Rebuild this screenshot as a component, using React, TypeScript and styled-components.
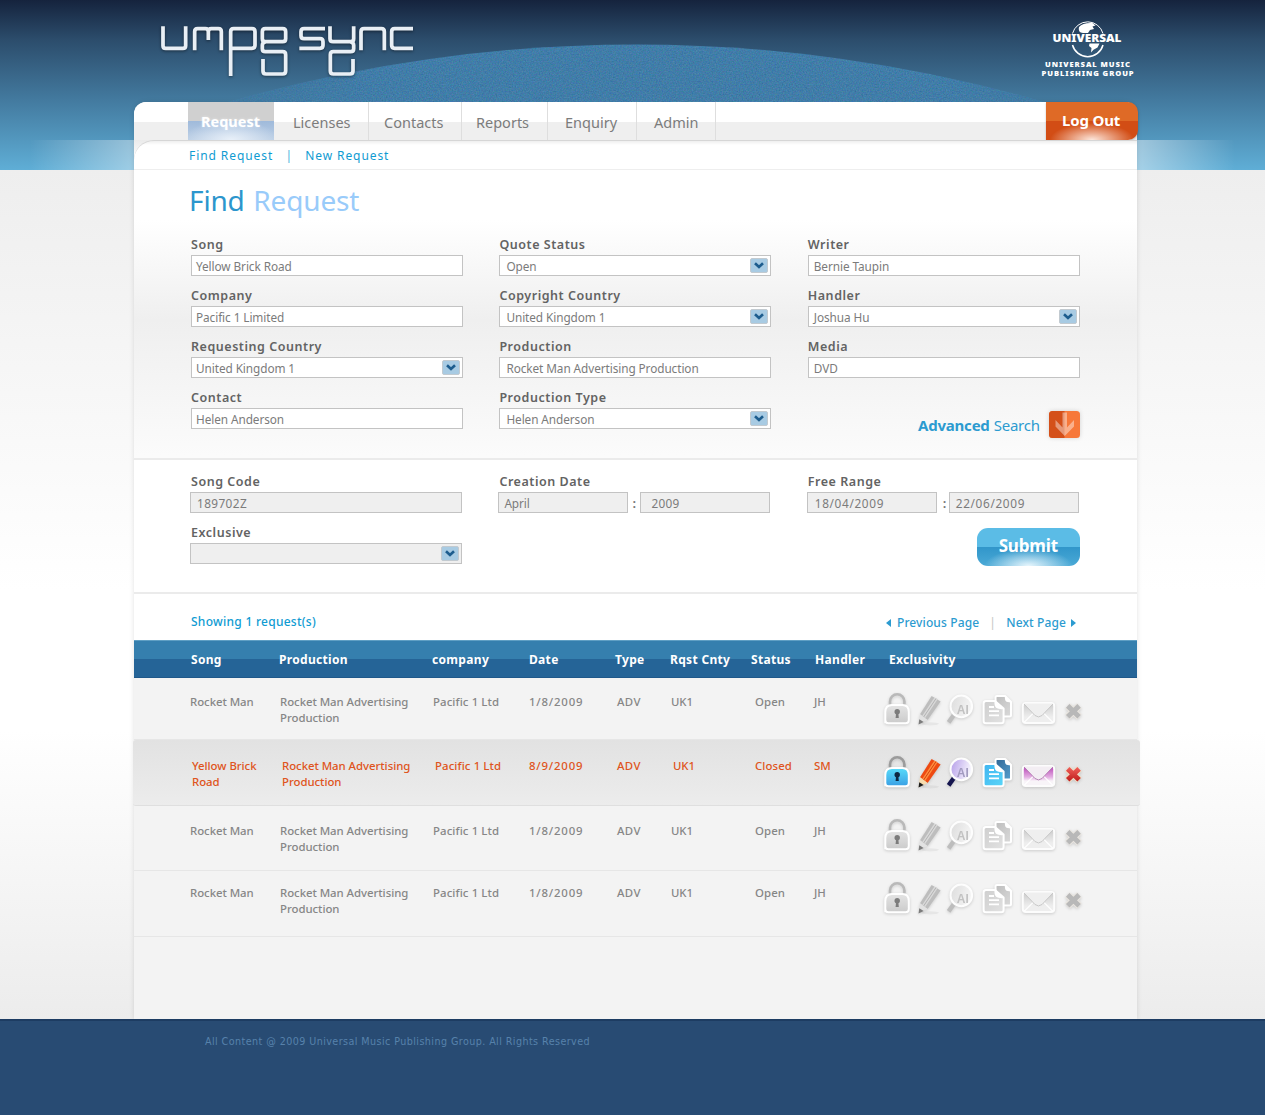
import React from "react";
import styled, { createGlobalStyle } from "styled-components";

const GlobalStyle = createGlobalStyle`
  * { box-sizing: border-box; }
  body { margin: 0; font-family: "Noto Sans", "Open Sans", sans-serif; color: #777; }
`;

const Page = styled.div`
  display: flex;
  flex-direction: column;
  height: 1115px;
  overflow: hidden;
  background:
    linear-gradient(to right, rgba(255,255,255,0) 30px, rgba(255,255,255,.4) 134px) 0 140px / 134px 30px no-repeat,
    linear-gradient(to left, rgba(255,255,255,0) 30px, rgba(255,255,255,.45) 128px) 100% 140px / 128px 30px no-repeat,
    linear-gradient(#15233d, #2c4d6c 40px, #437a9f 100px, #5faed6 170px) 0 0 / 100% 170px no-repeat,
    linear-gradient(#eeeeee, #ffffff 420px, #ffffff 560px, #ececec 849px) 0 170px / 100% 849px no-repeat;
`;

const Header = styled.header`
  height: 102px;
  flex: none;
  display: grid;
  grid-template-columns: 158px 260px 1fr 100px 128px;
  align-items: start;
  position: relative;
`;
const Arc = styled.svg`
  position: absolute;
  left: 225px;
  top: 40px;
`;
const Wordmark = styled.svg`
  grid-column: 2;
  margin-top: 24px;
  position: relative;
  filter: drop-shadow(0 1px 1.5px rgba(0,0,0,.45));
`;
const Universal = styled.svg`
  grid-column: 4;
  margin-top: 18px;
`;

const Shell = styled.main`
  width: 1003px;
  height: 917px;
  flex: none;
  margin-left: 134px;
  display: flex;
  flex-direction: column;
  background: #f3f3f3;
  border-radius: 12px 12px 0 0;
  box-shadow: 0 0 5px rgba(0,0,0,.12);
`;

const Nav = styled.nav`
  display: flex;
  flex: none;
  height: 38px;
  padding-left: 54px;
  border-radius: 12px 12px 0 0;
  background: linear-gradient(#fff 0 20px, #efefef 20px);
`;
const Tab = styled.a<{ $w: number; $pad: number }>`
  width: ${p => p.$w}px;
  padding-left: ${p => p.$pad}px;
  border-right: 1px solid #dedede;
  font-size: 14.5px;
  line-height: 41px;
  color: #7c7c7c;
`;
const ActiveTab = styled(Tab)`
  border-right: 0;
  color: #fff;
  font-weight: 700;
  line-height: 39px;
  text-shadow: 0 0 3px rgba(255,255,255,.5);
  background:
    radial-gradient(ellipse 48px 20px at 50% 100%, rgba(235,242,250,.95), rgba(235,242,250,0)) 0 19px / 100% 19px no-repeat,
    linear-gradient(#d0d0d0 0 19px, #9fbadb 19px, #bccfe5);
`;
const LogOut = styled.a`
  width: 92px;
  margin: 0 -1px 0 auto;
  padding-left: 16px;
  border-radius: 0 10px 10px 0;
  color: #fff;
  font-size: 15px;
  font-weight: 700;
  letter-spacing: -.15px;
  line-height: 37px;
  background:
    radial-gradient(ellipse 42px 17px at 50% 100%, rgba(255,240,232,.95), rgba(255,235,225,0)) 0 20px / 100% 18px no-repeat,
    linear-gradient(#df6a26 0 19px, #d24d15 19px);
  box-shadow: 0 1px 2px rgba(0,0,0,.25);
`;

const SubNavBack = styled.div`
  flex: none;
  background: linear-gradient(#ebebeb, #fff 20px);
`;
const SubNav = styled.div`
  display: flex;
  height: 30px;
  padding: 0 0 0 55px;
  border-top: 1px solid #d6d6d6;
  border-bottom: 1px solid #eee;
  border-radius: 20px 0 0 0;
  background: linear-gradient(#efefef, #fff 4px);
  color: #0f9bd2;
  font-size: 12px;
  letter-spacing: .92px;
  line-height: 30px;
`;
const Sep = styled.span`
  width: 32px;
  text-align: center;
  color: #49b3dc;
`;

const Title = styled.h1`
  flex: none;
  height: 50px;
  margin: 0;
  padding-left: 55px;
  background: #fff;
  font-size: 28px;
  font-weight: 400;
  letter-spacing: -.15px;
  word-spacing: 1.5px;
  line-height: 60px;
  color: #2c96cd;
  span { color: #99cbfa; }
`;

const Section = styled.section<{ $basic?: boolean }>`
  flex: none;
  display: grid;
  grid-template-columns: 272px 272px 272px;
  column-gap: 36.4px;
  row-gap: 10px;
  align-content: start;
  height: ${p => (p.$basic ? 240 : 134)}px;
  padding: ${p => (p.$basic ? "15px 0 0 57px" : "12px 0 0 56px")};
  border-bottom: 2px solid #ebebeb;
  background: ${p => (p.$basic ? "linear-gradient(#fff, #efefef 100px, #fbfbfb 235px)" : "#fff")};
`;
const Label = styled.div<{ $indent?: number }>`
  height: 20px;
  padding-left: ${p => p.$indent ?? 0}px;
  font-size: 12.5px;
  font-weight: 600;
  letter-spacing: .54px;
  line-height: 20px;
  color: #636363;
`;
const Box = styled.div<{ $pad?: number; $off?: boolean; $w?: number; $ls?: number }>`
  display: flex;
  justify-content: space-between;
  align-items: center;
  width: ${p => (p.$w ? p.$w + "px" : "100%")};
  height: 21px;
  padding: 0 2px 0 ${p => p.$pad ?? 4}px;
  border: 1px solid #c3c3c3;
  background: ${p => (p.$off ? "#efefef" : "#fff")};
  font-size: 11.8px;
  font-weight: 400;
  letter-spacing: ${p => p.$ls ?? -0.08}px;
  line-height: 20px;
  color: #7b7b7b;
`;
const Range = styled.div`
  display: flex;
  align-items: center;
  justify-content: space-between;
  font-size: 13px;
  font-weight: 600;
  line-height: 20px;
`;
const ActionCell = styled.div<{ $top: number; $out?: number }>`
  display: flex;
  justify-content: flex-end;
  align-items: center;
  height: 31px;
  margin: ${p => p.$top}px ${p => -(p.$out ?? 0)}px 0 0;
  font-size: 15px;
  letter-spacing: -.22px;
  color: #2c9bd0;
  b { margin-right: 4px; }
`;
const ArrowButton = styled.svg`
  margin-left: 7px;
  margin-right: -2px;
  filter: drop-shadow(0 0 2px rgba(0,0,0,.15));
`;
const Submit = styled.button`
  width: 103px;
  height: 38px;
  border: 0;
  padding: 0 0 3px;
  border-radius: 11px;
  color: #fff;
  font: 700 17px "Noto Sans", sans-serif;
  letter-spacing: -.15px;
  background:
    radial-gradient(ellipse 44px 17px at 50% 100%, rgba(240,250,255,.95), rgba(240,250,255,0)) 0 20px / 100% 18px no-repeat,
    linear-gradient(#5bbce6 0 19px, #3196ca 19px, #4aa9d6);
`;

const ResultsBar = styled.div`
  flex: none;
  display: flex;
  justify-content: space-between;
  height: 46px;
  padding: 8px 61px 0 57px;
  background: #fff;
  font-size: 12px;
  font-weight: 500;
  line-height: 40px;
  letter-spacing: .27px;
  color: #0f9bd2;
`;
const Pager = styled.div`
  display: flex;
  align-items: center;
  height: 42px;
  letter-spacing: .12px;
  line-height: 42px;
  color: #2c9bd0;
  i { font-style: normal; color: #c9c9c9; width: 27px; text-align: center; }
`;
const Tri = styled.span<{ $next?: boolean }>`
  border: 4.5px solid transparent;
  border-width: 4.5px 0;
  ${p => (p.$next ? "border-left: 5px solid #2c9bd0; margin-left: 5px;" : "border-right: 5px solid #2c9bd0; margin-right: 6px;")}
`;

const TableHead = styled.div`
  flex: none;
  display: grid;
  grid-template-columns: 88px 153px 97px 86px 55px 81px 64px 74px 1fr;
  height: 38px;
  padding-left: 57px;
  background: linear-gradient(#5f9fc4 0 1px, #357fae 1px 19px, #256497 19px 37px, #1f588a 37px);
  color: #fff;
  font-size: 12px;
  font-weight: 700;
  letter-spacing: .32px;
  line-height: 39px;
`;
const Row = styled.div<{ $h: number; $top: number; $active?: boolean }>`
  flex: none;
  display: grid;
  grid-template-columns: ${p => (p.$active ? "90px 153px 94px 88px 56px 82px 59px 68px 1fr" : "90px 153px 96px 88px 54px 84px 59px 68px 1fr")};
  height: ${p => p.$h}px;
  padding: ${p => p.$top}px 0 0 ${p => (p.$active ? 59 : 56)}px;
  margin: ${p => (p.$active ? "0 -3px 0 -1px" : 0)};
  border-bottom: 1px solid ${p => (p.$active ? "#dfdfdf" : "#e6e6e6")};
  background: ${p => (p.$active ? "linear-gradient(#e2e2e2, #ececec)" : "#f3f3f3")};
  border-radius: ${p => (p.$active ? "3px" : 0)};
  font-size: 11.4px;
  font-weight: 500;
  line-height: 16px;
  color: ${p => (p.$active ? "#df5420" : "#868686")};
`;
const Cell = styled.div<{ $ls?: number }>`
  letter-spacing: ${p => p.$ls ?? -0.04}px;
  white-space: pre-line;
`;
const Icons = styled.div<{ $lift: number }>`
  display: flex;
  height: 36px;
  margin-top: ${p => p.$lift}px;
  filter: drop-shadow(0 1px 1.5px rgba(0,0,0,.16));
`;

const Footer = styled.footer`
  flex: 1;
  padding: 13px 0 0 205px;
  border-top: 2px solid #1d3c62;
  background: #284b73;
  font: 9.6px/16px "DejaVu Sans", sans-serif;
  letter-spacing: .42px;
  color: #5782ab;
`;

const Chevron = () => (
  <svg width="18" height="15" viewBox="0 0 18 15">
    <rect x=".5" y=".5" width="17" height="14" rx="1.5" fill="#a8cbe3" stroke="#c2cad0" />
    <path d="M5 5.2 L9 9 L13 5.2" fill="none" stroke="#1d5d8e" strokeWidth="2.6" />
  </svg>
);

const LockIcon = ({ on }: { on?: boolean }) => (
  <svg width="30" height="36">
    <path d="M8 14 V9.5 a7.2 7.2 0 0 1 14.4 0 V14" fill="none" stroke={on ? "#9b9b9b" : "#b9b9b9"} strokeWidth="2.6" />
    <path d="M3.3 31.3 V20 Q3.3 13 10 13 H20.5 Q26.8 13 26.8 20 V28 Q26.8 31.3 23.5 31.3 H6.5 Q3.3 31.3 3.3 28Z" fill={on ? "url(#lockOn)" : "url(#greyFill)"} stroke="#fff" strokeWidth="2" />
    <circle cx="15.2" cy="19.8" r="2.7" fill={on ? "#0d2742" : "#7c7c7c"} />
    <path d="M14.2 20 h2 l.6 6 h-3.2z" fill={on ? "#0d2742" : "#7c7c7c"} />
  </svg>
);
const PencilIcon = ({ on }: { on?: boolean }) => (
  <svg width="32" height="36">
    <ellipse cx="18" cy="31.8" rx="9" ry="1.6" fill="#000" opacity=".05" />
    <path d="M19.6 4 L28.6 9.4 L15.6 28 L8 22.3Z" fill={on ? "#ee4a12" : "#bdbdbd"} />
    <path d="M22.4 5.6 L25.4 7.4 L13.2 26 L10.2 24Z" fill={on ? "#ff8d3c" : "#d9d9d9"} />
    <path d="M24 6.6 L11.6 25" stroke={on ? "#c92a04" : "#a8a8a8"} strokeWidth=".8" />
    <path d="M8 22.3 L15.6 28 L6.7 32Z" fill={on ? "#f7dcae" : "#e2e2e2"} />
    <path d="M7.3 27.3 L11.7 29.9 L6.5 32.4Z" fill={on ? "#1b1b1b" : "#7c7c7c"} />
  </svg>
);
const SearchIcon = ({ on }: { on?: boolean }) => (
  <svg width="36" height="36">
    <path d="M10.6 22 L4.6 30.4" stroke={on ? "#15154e" : "#bdbdbd"} strokeWidth="4.4" />
    <path d="M12 20.6 L9.6 23.6" stroke={on ? "#8f8fb0" : "#d0d0d0"} strokeWidth="3" />
    <circle cx="17.3" cy="14.4" r="10.8" fill={on ? "url(#lensOn)" : "url(#lensOff)"} stroke="#fdfdfd" strokeWidth="2" />
    <g clipPath="url(#lensClip)">
      <text x="12.8" y="21.6" fontFamily="Liberation Sans, sans-serif" fontWeight="700" fontSize="12" fill={on ? "#a29bc0" : "#c2c2c2"}>AI</text>
    </g>
  </svg>
);
const CopyIcon = ({ on }: { on?: boolean }) => (
  <svg width="38" height="36">
    <path d="M15.5 5.5 Q15.5 4 17 4 H25 L31 10 V23 Q31 24.5 29.5 24.5 H16Z" fill={on ? "url(#backOn)" : "url(#backOff)"} stroke="#fff" strokeWidth="2" strokeLinejoin="round" />
    <path d="M25 3.5 Q24.5 9 26.5 9.8 Q28.5 10.5 31.5 10Z" fill="#fff" />
    <path d="M3.6 11.5 Q3.6 9 6 9 H15 L23.6 16.5 V29 Q23.6 31.3 21.3 31.3 H6 Q3.6 31.3 3.6 29Z" fill={on ? "url(#pageOn)" : "url(#pageOff)"} stroke="#fff" strokeWidth="2" strokeLinejoin="round" />
    <path d="M14.5 8.5 Q14 14.5 16.5 16 Q19 17.5 24 17Z" fill="#fff" />
    <path d="M9 15 H14 M9 19.2 H19 M9 23.3 H19" stroke="#fff" strokeWidth="1.8" />
  </svg>
);
const MailIcon = ({ on }: { on?: boolean }) => (
  <svg width="42" height="36">
    <rect x="4.8" y="11" width="31.4" height="20" rx="3" fill={on ? "url(#mailOn)" : "url(#mailOff)"} stroke="#fcfcfc" strokeWidth="2" />
    <path d="M6 30.5 L15 21.5 M35 30.5 L26 21.5" stroke="#fff" strokeWidth="1.2" opacity=".9" />
    <path d="M6 11.4 H35 L24 23.5 Q20.5 26.4 17 23.5Z" fill={on ? "#f3eef3" : "#efefef"} />
    <path d="M6 12 L17 23.5 Q20.5 26.4 24 23.5 L35 12" fill="none" stroke={on ? "#b07db0" : "#c4c4c4"} strokeWidth=".9" />
  </svg>
);
const CrossIcon = ({ on }: { on?: boolean }) => (
  <svg width="26" height="36">
    <path d="M7.5 13.7 L19.3 24.9 M19.3 13.7 L7.5 24.9" stroke={on ? "#f0ddc4" : "#e9e5df"} strokeWidth="7" />
    <path d="M7.7 13.9 L19.1 24.7 M19.1 13.9 L7.7 24.7" stroke={on ? "url(#crossOn)" : "#b8b8b8"} strokeWidth="5" />
  </svg>
);

const DefsSvg = styled.svg`
  position: absolute;
`;
const Defs = () => (
  <DefsSvg width="0" height="0">
    <defs>
      <clipPath id="lensClip"><circle cx="17.3" cy="14.4" r="9.8" /></clipPath>
      <linearGradient id="lockOn" x2="0" y2="1"><stop stopColor="#58dcfa" /><stop offset="1" stopColor="#3a9fe4" /></linearGradient>
      <linearGradient id="greyFill" x2="0" y2="1"><stop stopColor="#e4e4e4" /><stop offset="1" stopColor="#cbcbcb" /></linearGradient>
      <linearGradient id="lensOn" x2="1" y2=".3"><stop stopColor="#b39be8" /><stop offset="1" stopColor="#f6f4fd" /></linearGradient>
      <linearGradient id="lensOff" x2="1" y2=".3"><stop stopColor="#dcdcdc" /><stop offset="1" stopColor="#f4f4f4" /></linearGradient>
      <linearGradient id="pageOn" x2="1" y2="1"><stop stopColor="#3fb4f0" /><stop offset="1" stopColor="#5ad6f8" /></linearGradient>
      <linearGradient id="pageOff" x2="1" y2="1"><stop stopColor="#cecece" /><stop offset="1" stopColor="#e2e2e2" /></linearGradient>
      <linearGradient id="backOn" x2="1" y2="1"><stop stopColor="#2f6594" /><stop offset="1" stopColor="#56a0cf" /></linearGradient>
      <linearGradient id="backOff" x2="1" y2="1"><stop stopColor="#bdbdbd" /><stop offset="1" stopColor="#dadada" /></linearGradient>
      <linearGradient id="mailOn" x2="0" y2="1"><stop stopColor="#b63fb4" /><stop offset=".55" stopColor="#e3aee2" /><stop offset=".75" stopColor="#f8f4f8" /></linearGradient>
      <linearGradient id="mailOff" x2="0" y2="1"><stop stopColor="#cacaca" /><stop offset=".7" stopColor="#eeeeee" /></linearGradient>
      <linearGradient id="crossOn" gradientUnits="userSpaceOnUse" x1="0" y1="12" x2="0" y2="28"><stop stopColor="#f0605a" /><stop offset="1" stopColor="#b91515" /></linearGradient>
    </defs>
  </DefsSvg>
);

const Logo = () => (
  <Wordmark width="260" height="56" viewBox="84 72 780 168">
    <g fill="none" stroke="#e9eff5" strokeWidth="11.2">
      <path d="M99 79 V137 Q99 145 107 145 H159 Q167 145 167 137 V79" />
      <path d="M194 151 V95 Q194 86 203 86 H226 Q235 86 235 95 V120 M235 95 Q235 86 244 86 H265 Q274 86 274 95 V151" />
      <path d="M302 228 V95 Q302 86 311 86 H366 Q375 86 375 95 V136 Q375 145 366 145 H302" />
      <path d="M406 86 H458 Q467 86 467 95 V116 Q467 125 458 125 H406 Q397 125 397 116 V95 Q397 86 406 86Z" />
      <path d="M406 125 Q397 128 397 136 V146 Q397 155 406 155 H458 Q467 155 467 164 V213 Q467 222 458 222 H408 Q399 222 399 213 V177" />
      <path d="M585 86 H522 Q513 86 513 95 V107 Q513 116 522 116 H570 Q579 116 579 125 V136 Q579 145 570 145 H508" />
      <path d="M600 79 V116 Q600 125 609 125 H662 Q671 125 671 116 V79" />
      <path d="M662 125 Q671 128 671 136 V146 Q671 155 662 155 H610 Q601 155 601 164 V213 Q601 222 610 222 H660 Q669 222 669 213 V177" />
      <path d="M693 151 V95 Q693 86 702 86 H754 Q763 86 763 95 V151" />
      <path d="M849 86 H794 Q785 86 785 95 V136 Q785 145 794 145 H849" />
    </g>
  </Wordmark>
);

const UniversalLogo = () => (
  <Universal width="100" height="62" viewBox="0 0 100 62">
    <g fill="none" stroke="#fff" strokeWidth="1">
      <path d="M35.5 15.5 A15.8 15.8 0 0 1 66 15.5" />
      <path d="M35.5 27 A15.8 15.8 0 0 0 66 27" strokeWidth="1.5" />
    </g>
    <path d="M42 9 Q46 4.4 55.5 5 L58.5 7.5 L55.5 8.5 L57 11 L53 12 L51 15 H46 Q40.5 14.5 42 9Z" fill="#fff" />
    <path d="M52.5 25.5 L62.5 25.5 L60.5 29.5 L56.5 31.8 L54 34.6 L54.5 30 L52 28Z" fill="#fff" />
    <g fill="#fff" fontFamily="Noto Sans, sans-serif" fontWeight="900">
      <text x="15.5" y="24.2" fontSize="9.6" textLength="69" lengthAdjust="spacingAndGlyphs">UNIVERSAL</text>
      <text x="8" y="49.3" fontSize="6.6" textLength="86" letterSpacing=".8" lengthAdjust="spacingAndGlyphs">UNIVERSAL MUSIC</text>
      <text x="4.6" y="57.7" fontSize="6.6" textLength="93" letterSpacing=".8" lengthAdjust="spacingAndGlyphs">PUBLISHING GROUP</text>
    </g>
  </Universal>
);

const HeaderArc = () => (
  <Arc width="830" height="62" viewBox="0 0 830 62">
    <defs>
      <linearGradient id="arcFade">
        <stop stopColor="#407ca8" stopOpacity=".4" />
        <stop offset=".18" stopColor="#407ca8" />
        <stop offset=".88" stopColor="#407ca8" />
        <stop offset="1" stopColor="#407ca8" stopOpacity=".6" />
      </linearGradient>
      <filter id="grain" x="0" y="0" width="100%" height="100%" colorInterpolationFilters="sRGB">
        <feTurbulence type="fractalNoise" baseFrequency=".7" numOctaves="2" seed="4" />
        <feColorMatrix values=".22 0 0 0 .145  0 .18 0 0 .4  0 0 .18 0 .57  0 0 0 0 1" result="n" />
        <feComposite in="n" in2="SourceGraphic" operator="in" />
      </filter>
    </defs>
    <path d="M2 62 A1482 1482 0 0 1 820 62Z" fill="url(#arcFade)" filter="url(#grain)" />
  </Arc>
);

type FieldProps = { label: string; value: string; pad?: number; select?: boolean; off?: boolean; indent?: number; ls?: number };
const Field = ({ label, value, pad, select, off, indent, ls }: FieldProps) => (
  <div>
    <Label $indent={indent}>{label}</Label>
    <Box $pad={pad} $off={off} $ls={ls}>
      <span>{value}</span>
      {select && <Chevron />}
    </Box>
  </div>
);

const tabs: [string, number, number][] = [
  ["Licenses", 95, 19],
  ["Contacts", 93, 15],
  ["Reports", 86, 14],
  ["Enquiry", 89, 17],
  ["Admin", 79, 17],
];

const rows = [
  { h: 62, top: 16, lift: -2 },
  { h: 66, top: 18, lift: -3, active: true },
  { h: 65, top: 17, lift: -5 },
  { h: 66, top: 14, lift: -4 },
];

const App = () => (
  <Page>
    <GlobalStyle />
    <Defs />
    <Header>
      <HeaderArc />
      <Logo />
      <UniversalLogo />
    </Header>
    <Shell>
      <Nav>
        <ActiveTab $w={86} $pad={13}>Request</ActiveTab>
        {tabs.map(([t, w, pad]) => (
          <Tab key={t} $w={w} $pad={pad}>{t}</Tab>
        ))}
        <LogOut>Log Out</LogOut>
      </Nav>
      <SubNavBack>
        <SubNav>
          <span>Find Request</span>
          <Sep>|</Sep>
          <span>New Request</span>
        </SubNav>
      </SubNavBack>
      <Title>Find <span>Request</span></Title>
      <Section $basic>
        <Field label="Song" value="Yellow Brick Road" />
        <Field label="Quote Status" value="Open" pad={6} select />
        <Field label="Writer" value="Bernie Taupin" pad={5} />
        <Field label="Company" value="Pacific 1 Limited" />
        <Field label="Copyright Country" value="United Kingdom 1" pad={6} select />
        <Field label="Handler" value="Joshua Hu" pad={5} select />
        <Field label="Requesting Country" value="United Kingdom 1" select />
        <Field label="Production" value="Rocket Man Advertising Production" pad={6} />
        <Field label="Media" value="DVD" pad={5} />
        <Field label="Contact" value="Helen Anderson" />
        <Field label="Production Type" value="Helen Anderson" pad={6} select />
        <ActionCell $top={21}>
          <b>Advanced</b>Search
          <ArrowButton width="35" height="31" viewBox="0 0 35 31">
            <rect x="2" y="2" width="31" height="27" rx="3.5" fill="#f7783a" />
            <path d="M5.5 2 H17.5 V29 H5.5 Q2 29 2 25.5 V5.5 Q2 2 5.5 2Z" fill="#d4501a" />
            <path d="M15.5 3.5 H20 V18.5 L27 11 V17.5 L17.7 27 L8.5 17.5 V11 L15.5 18.5Z" fill="#fff" opacity=".42" />
          </ArrowButton>
        </ActionCell>
      </Section>
      <Section>
        <Field label="Song Code" value="189702Z" pad={6} off indent={1} ls={0.4} />
        <div>
          <Label $indent={1}>Creation Date</Label>
          <Range>
            <Box $w={130} $pad={5} $off>April</Box>:
            <Box $w={130} $pad={10} $off $ls={0.3}>2009</Box>
          </Range>
        </div>
        <div>
          <Label $indent={1}>Free Range</Label>
          <Range>
            <Box $w={130} $pad={7} $off $ls={0.65}>18/04/2009</Box>&nbsp;:
            <Box $w={130} $pad={6} $off $ls={0.65}>22/06/2009</Box>
          </Range>
        </div>
        <Field label="Exclusive" value="" off select indent={1} />
        <div />
        <ActionCell $top={8.5} $out={1}><Submit>Submit</Submit></ActionCell>
      </Section>
      <ResultsBar>
        <span>Showing 1 request(s)</span>
        <Pager>
          <Tri />Previous Page<i>|</i>Next Page<Tri $next />
        </Pager>
      </ResultsBar>
      <TableHead>
        {["Song", "Production", "company", "Date", "Type", "Rqst Cnty", "Status", "Handler", "Exclusivity"].map(h => (
          <span key={h}>{h}</span>
        ))}
      </TableHead>
      {rows.map((r, i) => (
        <Row key={i} $h={r.h} $top={r.top} $active={r.active}>
          <Cell>{r.active ? "Yellow Brick\nRoad" : "Rocket Man"}</Cell>
          <Cell>{"Rocket Man Advertising\nProduction"}</Cell>
          <Cell $ls={0.1}>Pacific 1 Ltd</Cell>
          <Cell $ls={0.8}>{r.active ? "8/9/2009" : "1/8/2009"}</Cell>
          <Cell $ls={0.4}>ADV</Cell>
          <Cell>UK1</Cell>
          <Cell $ls={0.1}>{r.active ? "Closed" : "Open"}</Cell>
          <Cell>{r.active ? "SM" : "JH"}</Cell>
          <Icons $lift={r.lift}>
            <LockIcon on={r.active} />
            <PencilIcon on={r.active} />
            <SearchIcon on={r.active} />
            <CopyIcon on={r.active} />
            <MailIcon on={r.active} />
            <CrossIcon on={r.active} />
          </Icons>
        </Row>
      ))}
    </Shell>
    <Footer>All Content @ 2009 Universal Music Publishing Group. All Rights Reserved</Footer>
  </Page>
);

export default App;
